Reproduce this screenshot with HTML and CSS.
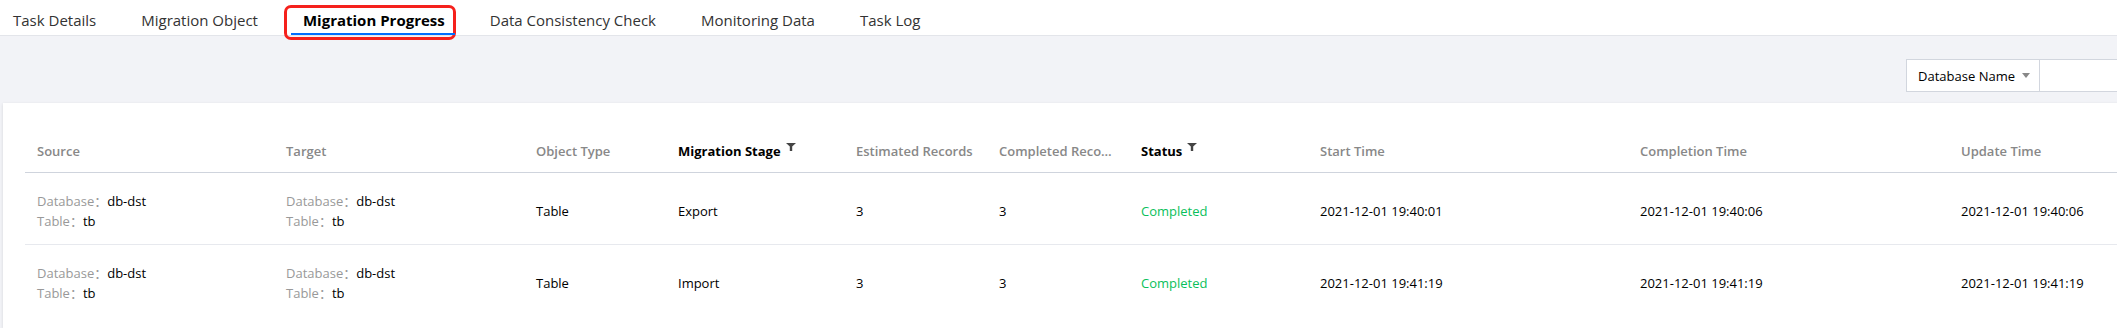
FILE: index.html
```html
<!DOCTYPE html>
<html lang="en">
<head>
  <meta charset="UTF-8">
  <title>Migration Progress</title>
  <meta name="viewport" content="width=device-width, initial-scale=1.0">
  <link rel="stylesheet" href="styles.css">
</head>
<body>
  <div class="tabs">
    <div class="tab">Task Details</div>
    <div class="tab">Migration Object</div>
    <div class="tab active">Migration Progress</div>
    <div class="tab">Data Consistency Check</div>
    <div class="tab">Monitoring Data</div>
    <div class="tab">Task Log</div>
  </div>

  <div class="main">
    <div class="toolbar">
      <div class="select">
        <span>Database Name</span>
        <span class="arrow"></span>
      </div>
      <div class="search"></div>
    </div>

    <div class="card">
      <table class="grid">
        <colgroup>
          <col style="width: 249px">
          <col style="width: 250px">
          <col style="width: 142px">
          <col style="width: 178px">
          <col style="width: 143px">
          <col style="width: 142px">
          <col style="width: 179px">
          <col style="width: 320px">
          <col style="width: 321px">
          <col style="width: 320px">
        </colgroup>
        <thead>
          <tr>
            <th>Source</th>
            <th>Target</th>
            <th>Object Type</th>
            <th class="on">Migration Stage<svg class="filter" width="10" height="8" viewBox="0 0 10 8"><path d="M0 0H10L6.2 3.6V8H3.8V3.6Z"/></svg></th>
            <th>Estimated Records</th>
            <th>Completed Records</th>
            <th class="on">Status<svg class="filter" width="10" height="8" viewBox="0 0 10 8"><path d="M0 0H10L6.2 3.6V8H3.8V3.6Z"/></svg></th>
            <th>Start Time</th>
            <th>Completion Time</th>
            <th>Update Time</th>
          </tr>
        </thead>
        <tbody>
          <tr>
            <td><div><span class="label">Database：</span>db-dst</div><div><span class="label">Table：</span>tb</div></td>
            <td><div><span class="label">Database：</span>db-dst</div><div><span class="label">Table：</span>tb</div></td>
            <td>Table</td>
            <td>Export</td>
            <td>3</td>
            <td>3</td>
            <td class="ok">Completed</td>
            <td>2021-12-01 19:40:01</td>
            <td>2021-12-01 19:40:06</td>
            <td>2021-12-01 19:40:06</td>
          </tr>
          <tr>
            <td><div><span class="label">Database：</span>db-dst</div><div><span class="label">Table：</span>tb</div></td>
            <td><div><span class="label">Database：</span>db-dst</div><div><span class="label">Table：</span>tb</div></td>
            <td>Table</td>
            <td>Import</td>
            <td>3</td>
            <td>3</td>
            <td class="ok">Completed</td>
            <td>2021-12-01 19:41:19</td>
            <td>2021-12-01 19:41:19</td>
            <td>2021-12-01 19:41:19</td>
          </tr>
        </tbody>
      </table>
    </div>
  </div>
</body>
</html>
```

FILE: styles.css
```css
body {
  margin: 0;
  background: #f2f3f7;
  font-family: 'Open Sans', 'Noto Sans CJK SC', sans-serif;
  color: #000;
  overflow: hidden;
}
.tabs {
  display: flex;
  gap: 25px;
  height: 35px;
  padding-left: 3px;
  background: #fff;
  border-bottom: 1px solid #e3e5ea;
}
.tab {
  position: relative;
  padding: 5px 10px 0;
  line-height: 30px;
  font-size: 15px;
  color: #333;
  white-space: nowrap;
}
.tab.active {
  font-weight: 700;
  color: #000;
}
.tab.active::after {
  content: '';
  position: absolute;
  left: -2px;
  right: 0;
  bottom: 0;
  height: 2px;
  background: #006eff;
}
.tab.active::before {
  content: '';
  position: absolute;
  left: -9px;
  right: -1px;
  top: 5px;
  bottom: -5px;
  border: 3px solid #f5211c;
  border-radius: 7px;
}
.main {
  width: 2300px;
  padding-left: 3px;
}
.toolbar {
  display: flex;
  justify-content: flex-end;
  padding: 23px 0 11px;
}
.select, .search {
  height: 31px;
  background: #fff;
  border: 1px solid #d2d6de;
}
.select {
  display: flex;
  align-items: center;
  gap: 7px;
  padding: 0 9px 0 11px;
  font-size: 13px;
  color: #000;
}
.arrow {
  width: 0;
  height: 0;
  border-left: 4px solid transparent;
  border-right: 4px solid transparent;
  border-top: 5px solid #888;
}
.search {
  width: 262px;
  border-left: none;
}
.card {
  background: #fff;
  padding: 28px 22px 12px;
  box-shadow: 0 1px 3px rgba(0,0,0,0.12);
}
.grid {
  table-layout: fixed;
  width: 2244px;
  border-collapse: collapse;
  font-size: 13px;
}
.grid th {
  padding: 10px 12px 11px;
  line-height: 20px;
  text-align: left;
  font-weight: 600;
  color: #888;
  white-space: nowrap;
  overflow: hidden;
  text-overflow: ellipsis;
  border-bottom: 1px solid #cfd4dd;
}
.grid th.on {
  color: #000;
  font-weight: 700;
}
.filter {
  fill: #444;
  margin-left: 5px;
  vertical-align: 5px;
}
.grid td {
  padding: 18px 12px 13px;
  line-height: 20px;
  vertical-align: middle;
  border-bottom: 1px solid #e7e9ee;
  white-space: nowrap;
}
.grid tbody tr:last-child td {
  border-bottom: none;
}
.label {
  color: #999;
}
.ok {
  color: #0abf5b;
}
```
